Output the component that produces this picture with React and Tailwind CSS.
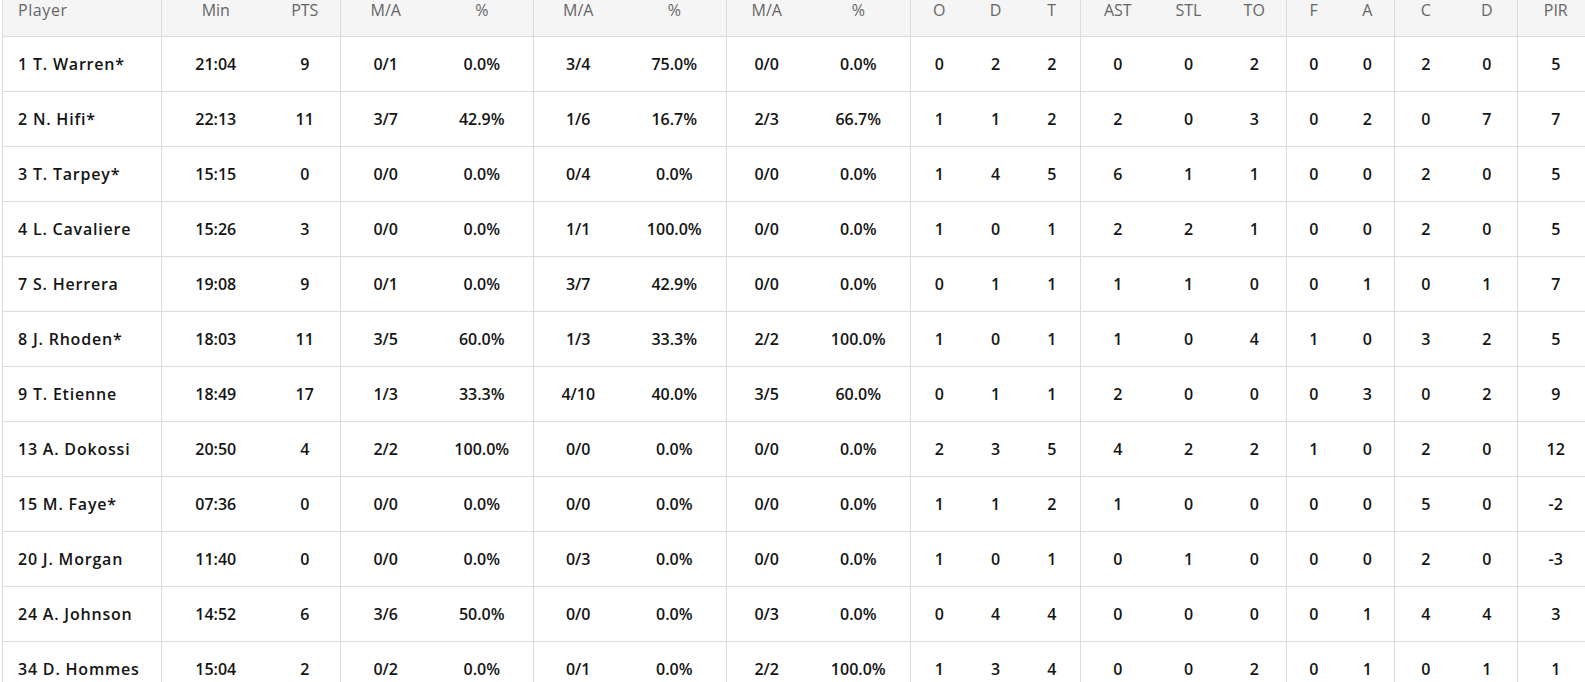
import React from "react";

const columns = [
  { label: "Player", width: 159, align: "left", group: true },
  { label: "Min", width: 108, group: true },
  { label: "PTS", width: 71 },
  { label: "M/A", width: 90, group: true },
  { label: "%", width: 103 },
  { label: "M/A", width: 89, group: true },
  { label: "%", width: 104 },
  { label: "M/A", width: 80, group: true },
  { label: "%", width: 104 },
  { label: "O", width: 57, group: true },
  { label: "D", width: 56 },
  { label: "T", width: 57 },
  { label: "AST", width: 74, group: true },
  { label: "STL", width: 68 },
  { label: "TO", width: 64 },
  { label: "F", width: 54, group: true },
  { label: "A", width: 54 },
  { label: "C", width: 62, group: true },
  { label: "D", width: 61 },
  { label: "PIR", width: 76, group: true },
];

const players = [
  ["1 T. Warren*", "21:04", 9, "0/1", "0.0%", "3/4", "75.0%", "0/0", "0.0%", 0, 2, 2, 0, 0, 2, 0, 0, 2, 0, 5],
  ["2 N. Hifi*", "22:13", 11, "3/7", "42.9%", "1/6", "16.7%", "2/3", "66.7%", 1, 1, 2, 2, 0, 3, 0, 2, 0, 7, 7],
  ["3 T. Tarpey*", "15:15", 0, "0/0", "0.0%", "0/4", "0.0%", "0/0", "0.0%", 1, 4, 5, 6, 1, 1, 0, 0, 2, 0, 5],
  ["4 L. Cavaliere", "15:26", 3, "0/0", "0.0%", "1/1", "100.0%", "0/0", "0.0%", 1, 0, 1, 2, 2, 1, 0, 0, 2, 0, 5],
  ["7 S. Herrera", "19:08", 9, "0/1", "0.0%", "3/7", "42.9%", "0/0", "0.0%", 0, 1, 1, 1, 1, 0, 0, 1, 0, 1, 7],
  ["8 J. Rhoden*", "18:03", 11, "3/5", "60.0%", "1/3", "33.3%", "2/2", "100.0%", 1, 0, 1, 1, 0, 4, 1, 0, 3, 2, 5],
  ["9 T. Etienne", "18:49", 17, "1/3", "33.3%", "4/10", "40.0%", "3/5", "60.0%", 0, 1, 1, 2, 0, 0, 0, 3, 0, 2, 9],
  ["13 A. Dokossi", "20:50", 4, "2/2", "100.0%", "0/0", "0.0%", "0/0", "0.0%", 2, 3, 5, 4, 2, 2, 1, 0, 2, 0, 12],
  ["15 M. Faye*", "07:36", 0, "0/0", "0.0%", "0/0", "0.0%", "0/0", "0.0%", 1, 1, 2, 1, 0, 0, 0, 0, 5, 0, -2],
  ["20 J. Morgan", "11:40", 0, "0/0", "0.0%", "0/3", "0.0%", "0/0", "0.0%", 1, 0, 1, 0, 1, 0, 0, 0, 2, 0, -3],
  ["24 A. Johnson", "14:52", 6, "3/6", "50.0%", "0/0", "0.0%", "0/3", "0.0%", 0, 4, 4, 0, 0, 0, 0, 1, 4, 4, 3],
  ["34 D. Hommes", "15:04", 2, "0/2", "0.0%", "0/1", "0.0%", "2/2", "100.0%", 1, 3, 4, 0, 0, 2, 0, 1, 0, 1, 1],
];

function BoxScore() {
  return (
    <div className="w-[1585px] h-[682px] overflow-hidden bg-white" style={{ fontFamily: "'Open Sans', Lato, sans-serif" }}>
      <table className="-mt-[15px] ml-[2px] w-[1591px] table-fixed border-collapse text-[16px]">
        <colgroup>
          {columns.map((col, i) => (
            <col key={i} style={{ width: col.width }} />
          ))}
        </colgroup>
        <thead>
          <tr className="bg-[#f5f5f5]">
            {columns.map((col, i) => (
              <th
                key={i}
                className={`h-[51px] border-b border-[#dcdcdc] font-normal text-[#666666] ${
                  col.group ? "border-l" : ""
                } ${col.align === "left" ? "text-left pl-[15px] tracking-[0.6px]" : "text-center"}`}
              >
                {col.label}
              </th>
            ))}
          </tr>
        </thead>
        <tbody>
          {players.map((row, r) => (
            <tr key={r} className="bg-white">
              {row.map((cell, i) => (
                <td
                  key={i}
                  className={`h-[55px] border-b border-[#dcdcdc] font-semibold text-[#141414] ${
                    columns[i].group ? "border-l" : ""
                  } ${columns[i].align === "left" ? "text-left pl-[15px] tracking-[0.8px]" : "text-center"}`}
                >
                  {cell}
                </td>
              ))}
            </tr>
          ))}
        </tbody>
      </table>
    </div>
  );
}

export default BoxScore;
